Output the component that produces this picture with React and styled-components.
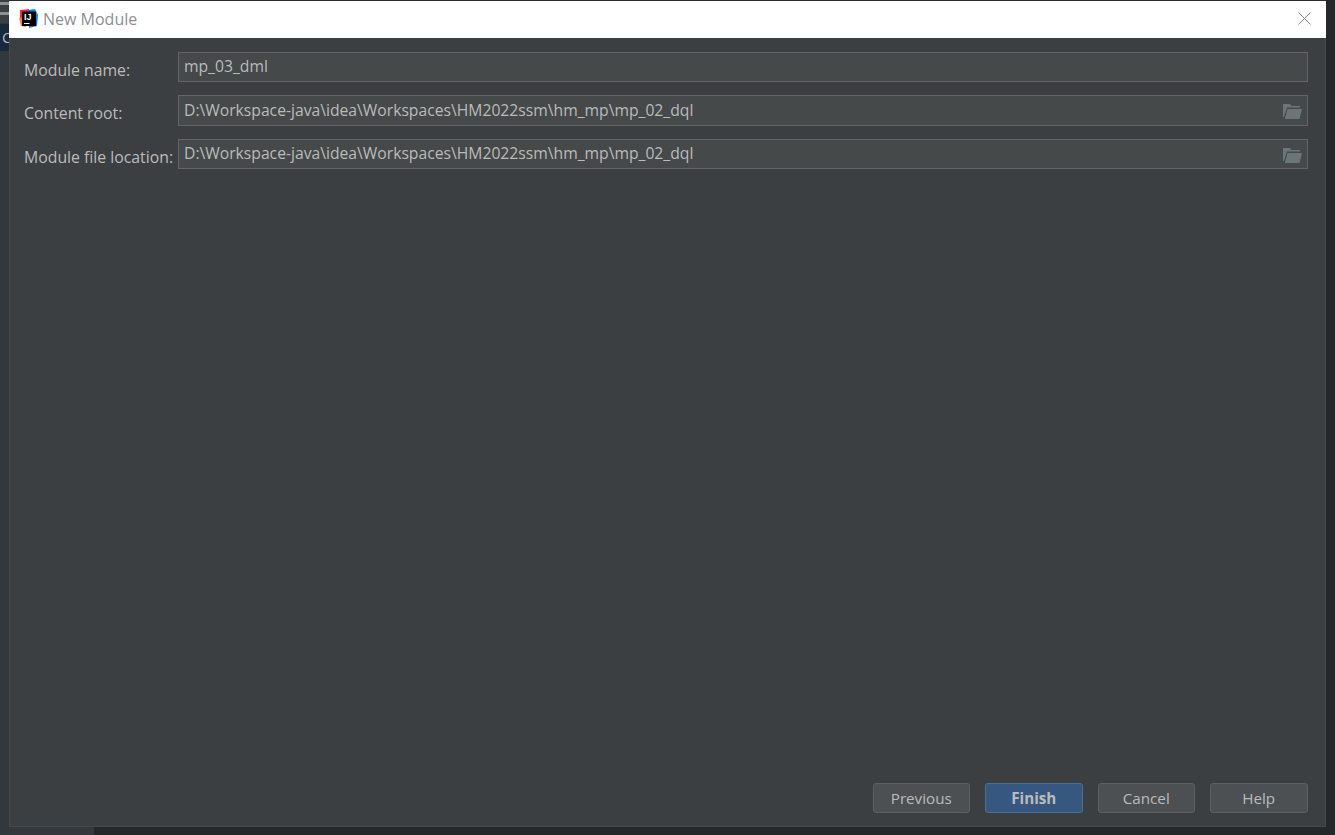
import React from 'react';
import styled, { createGlobalStyle } from 'styled-components';

const uiFont = `"Open Sans", "Noto Sans", "Liberation Sans", sans-serif`;

const GlobalStyle = createGlobalStyle`
  html, body {
    margin: 0;
    padding: 0;
    height: 100%;
    overflow: hidden;
    background: #24282b;
  }
  #root {
    height: 100%;
  }
`;

const Desktop = styled.div`
  width: 1335px;
  height: 835px;
  display: grid;
  grid-template-columns: 9px 1317px 9px;
  grid-template-rows: 827px 8px;
  background: #24282b;
  font-family: ${uiFont};
`;

const LeftStrip = styled.div`
  grid-column: 1;
  grid-row: 1 / span 2;
  display: flex;
  flex-direction: column;
  background: #31393e;
`;

const StripIcons = styled.div`
  height: 23px;
  background: #3b3f41;
  display: flex;
  flex-direction: column;
  gap: 7px;
  padding-top: 2px;
  box-sizing: border-box;
`;

const StripMark = styled.div`
  height: 3px;
  background: #8d9193;
`;

const StripTab = styled.div`
  height: 27px;
  margin-top: 1px;
  background: #17293a;
  color: #a9b7c2;
  font-size: 15px;
  line-height: 27px;
  overflow: hidden;
  padding-left: 2px;
`;

const Dialog = styled.div`
  grid-column: 2;
  grid-row: 1;
  display: flex;
  flex-direction: column;
  background: #3c3f41;
  border-top: 1px solid #2b2d2e;
`;

const TitleBar = styled.div`
  height: 37px;
  background: #ffffff;
  display: flex;
  align-items: center;
  padding: 0 15px 2px 10px;
  box-sizing: border-box;
  gap: 5px;
`;

const Title = styled.div`
  flex: 1;
  color: #8b8e91;
  font-size: 16px;
`;

const Body = styled.div`
  flex: 1;
  display: flex;
  flex-direction: column;
  padding: 14px 18px 14px 15px;
  box-shadow: inset 1px 0 0 #474a4c, inset -1px 0 0 #474a4c, inset 0 -1px 0 #474a4c;
`;

const Form = styled.div`
  flex: 1;
  display: flex;
  flex-direction: column;
  gap: 13px;
`;

const Row = styled.div`
  display: flex;
  gap: 4px;
`;

const Label = styled.div`
  width: 150px;
  padding-top: 8px;
  color: #bbbbbb;
  font-size: 15.8px;
  white-space: nowrap;
  line-height: 20px;
`;

const Field = styled.div`
  flex: 1;
  height: ${props => props.$height}px;
  box-sizing: border-box;
  display: flex;
  align-items: center;
  justify-content: space-between;
  padding: 0 5px;
  background: #45494a;
  border: 1px solid #646464;
  color: #bbbbbb;
  font-size: 15.7px;
`;

const FieldText = styled.span`
  padding-bottom: ${props => props.$raise}px;
`;

const FolderSvg = styled.svg`
  align-self: flex-start;
  margin-top: 8px;
`;

const Footer = styled.div`
  display: flex;
  justify-content: flex-end;
  gap: 15px;
  padding-right: 0.5px;
`;

const Button = styled.div`
  width: 97.5px;
  height: 30px;
  box-sizing: border-box;
  display: flex;
  align-items: center;
  justify-content: center;
  border-radius: 3px;
  border: 1px solid ${props => (props.$primary ? '#4c708c' : '#5e6060')};
  background: ${props => (props.$primary ? '#365880' : '#4c5052')};
  color: #bbbbbb;
  font-size: 15.2px;
  font-weight: ${props => (props.$primary ? 700 : 400)};
`;

const RightStrip = styled.div`
  grid-column: 3;
  grid-row: 1 / span 2;
  background: #25282a;
`;

const BottomStrip = styled.div`
  grid-column: 2;
  grid-row: 2;
  background: linear-gradient(90deg, #33393d 0 85px, #24282b 85px);
`;

const Logo = () => (
  <svg width="19" height="19" viewBox="0 0 19 19">
    <path d="M1 1 L10 0 L10 16 L1 12 Z" fill="#fe2857" />
    <path d="M0 9 L6 8 L7 18 L2 17 Z" fill="#fe7a3c" />
    <path d="M9 1 L16 0 L19 6 L18 17 L10 19 Z" fill="#087cfa" />
    <path d="M14 1 L18 3 L19 8 L15 8 Z" fill="#21d789" opacity="0.3" />
    <rect x="3" y="2.5" width="14" height="14.5" fill="#000000" />
    <text x="5" y="11" fill="#ffffff" fontSize="9" fontWeight="700" fontFamily="Liberation Sans, sans-serif">IJ</text>
    <rect x="5" y="14" width="5.5" height="1" fill="#ffffff" />
  </svg>
);

const CloseIcon = () => (
  <svg width="13" height="13" viewBox="0 0 13 13">
    <path d="M0.5 0.5 L12.5 12.5 M12.5 0.5 L0.5 12.5" stroke="#8a8a8a" strokeWidth="1" fill="none" />
  </svg>
);

const FolderIcon = () => (
  <FolderSvg width="19" height="15" viewBox="0 0 19 15">
    <path d="M0 0 H7 L8.5 2 H17 V3.5 H4 L1 13 H0 Z" fill="#6c7678" />
    <path d="M4.5 5 H19 L16.5 15 H1.8 Z" fill="#6c7678" />
  </FolderSvg>
);

const App = () => (
  <>
    <GlobalStyle />
    <Desktop>
      <LeftStrip>
        <StripIcons>
          <StripMark />
          <StripMark />
        </StripIcons>
        <StripTab>C</StripTab>
      </LeftStrip>
      <Dialog>
        <TitleBar>
          <Logo />
          <Title>New Module</Title>
          <CloseIcon />
        </TitleBar>
        <Body>
          <Form>
            <Row>
              <Label>Module name:</Label>
              <Field $height={30}>
                <FieldText $raise={3}>mp_03_dml</FieldText>
              </Field>
            </Row>
            <Row>
              <Label>Content root:</Label>
              <Field $height={31}>
                <FieldText $raise={1}>D:\Workspace-java\idea\Workspaces\HM2022ssm\hm_mp\mp_02_dql</FieldText>
                <FolderIcon />
              </Field>
            </Row>
            <Row>
              <Label>Module file location:</Label>
              <Field $height={30}>
                <FieldText $raise={3}>D:\Workspace-java\idea\Workspaces\HM2022ssm\hm_mp\mp_02_dql</FieldText>
                <FolderIcon />
              </Field>
            </Row>
          </Form>
          <Footer>
            <Button>Previous</Button>
            <Button $primary>Finish</Button>
            <Button>Cancel</Button>
            <Button>Help</Button>
          </Footer>
        </Body>
      </Dialog>
      <RightStrip />
      <BottomStrip />
    </Desktop>
  </>
);

export default App;
